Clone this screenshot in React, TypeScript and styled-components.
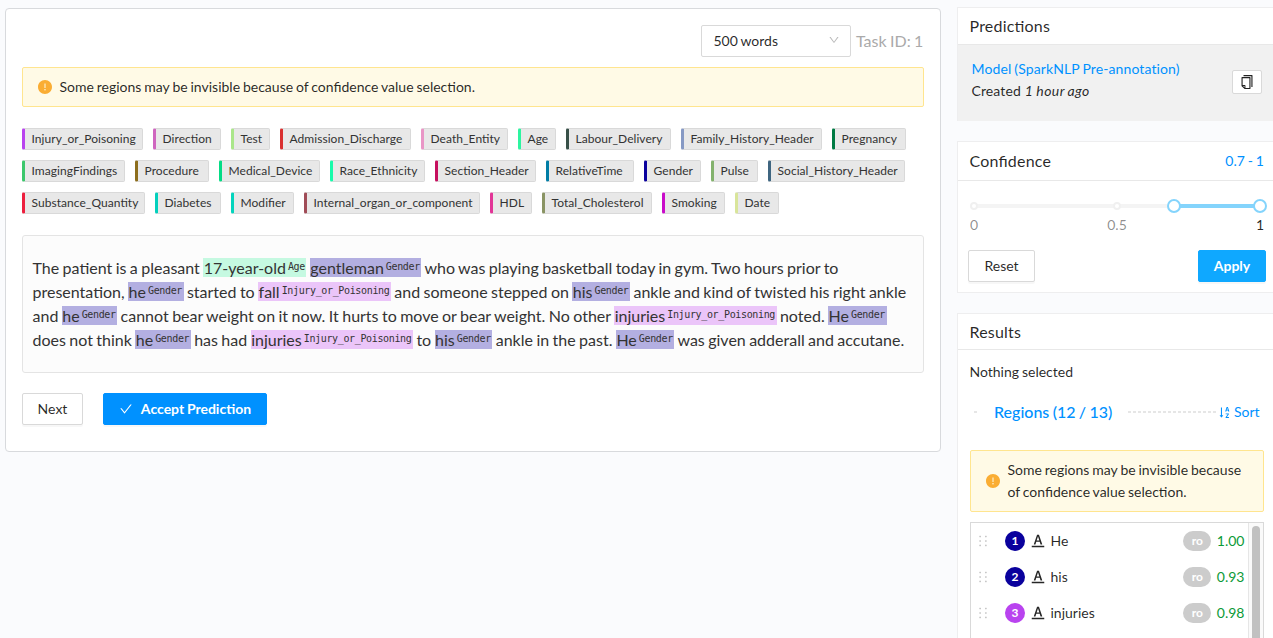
import React from "react";
import styled, { createGlobalStyle } from "styled-components";
import {
  AiFillExclamationCircle,
  AiOutlineCheck,
  AiOutlineCopy,
  AiOutlineDown,
  AiOutlineFontColors,
  AiOutlineHolder,
  AiOutlineSortAscending,
} from "react-icons/ai";

const GlobalStyle = createGlobalStyle`
  *, *::before, *::after { box-sizing: border-box; }
  html, body { margin: 0; height: 638px; overflow: hidden; background: #fafbfd; }
  body {
    font-family: Lato, "Liberation Sans", sans-serif;
    font-size: 14px;
    line-height: 22px;
    word-spacing: -0.7px;
    color: rgba(0, 0, 0, 0.85);
  }
`;

const Page = styled.div`
  display: flex;
  align-items: flex-start;
  gap: 16px;
  width: 1273px;
  height: 638px;
  padding: 8px 0 0 5px;
  overflow: hidden;
`;

const Editor = styled.main`
  flex: none;
  width: 936px;
  height: 444px;
  padding: 16px;
  background: #fff;
  border: 1px solid #d8dadd;
  border-radius: 4px;
`;

const TopBar = styled.div`
  display: flex;
  justify-content: flex-end;
  align-items: center;
  gap: 5px;
  height: 32px;
`;

const Select = styled.div`
  display: flex;
  align-items: center;
  justify-content: space-between;
  width: 150px;
  height: 32px;
  padding: 0 10px 0 11.5px;
  border: 1px solid #d9d9d9;
  border-radius: 2px;
  svg { color: rgba(0, 0, 0, 0.28); margin-top: -2px; }
`;

const TaskId = styled.span`
  width: 68px;
  font-size: 16px;
  white-space: nowrap;
  color: #aaa;
`;

const Alert = styled.div<{ $compact?: boolean }>`
  display: flex;
  align-items: center;
  gap: 6.5px;
  min-height: 40px;
  margin: ${(p) => (p.$compact ? "26px 9px 0 12px" : "10px 0 0")};
  padding: ${(p) => (p.$compact ? "8px 14px" : "0 14px")};
  background: #fffae6;
  border: 1px solid #ffe58f;
  border-radius: 2px;
  svg { flex: none; color: #faad33; }
`;

const Labels = styled.div`
  display: flex;
  flex-wrap: wrap;
  gap: 10px;
  margin-top: 21px;
`;

const Label = styled.span<{ $color: string; $width: number }>`
  width: ${(p) => p.$width}px;
  height: 22px;
  padding-left: 6.5px;
  font-size: 12px;
  line-height: 20px;
  letter-spacing: 0.05px;
  font-feature-settings: "liga" 1;
  color: #333;
  background: #e8e8e8;
  border: 1px solid #d9d9d9;
  border-left: 3px solid ${(p) => p.$color};
  border-radius: 2px;
  white-space: nowrap;
`;

const TextPanel = styled.div`
  height: 138px;
  margin-top: 21px;
  padding: 20px 9.5px;
  font-size: 16px;
  line-height: 24px;
  word-spacing: -0.68px;
  color: #333;
  background: #fcfcfc;
  border: 1px solid #e4e4e4;
  border-radius: 3px;
`;

const Line = styled.div`
  white-space: pre;
`;

const Mark = styled.span<{ $bg: string }>`
  padding: 0 0.5px;
  background: ${(p) => p.$bg};
`;

const Tag = styled.sup`
  margin: 0 1px 0 2px;
  font-family: "DejaVu Sans Mono", "Liberation Mono", monospace;
  font-size: 10px;
  letter-spacing: -0.35px;
  line-height: 0;
  vertical-align: 4.5px;
`;

const Actions = styled.div`
  display: flex;
  gap: 20px;
  margin-top: 20px;
`;

const Button = styled.button<{ $bg?: string; $width: number }>`
  display: flex;
  align-items: center;
  justify-content: center;
  gap: 8px;
  width: ${(p) => p.$width}px;
  height: 32px;
  padding: 0;
  font: ${(p) => (p.$bg ? 700 : 400)} 14px/22px Lato, "Liberation Sans", sans-serif;
  word-spacing: -0.7px;
  color: ${(p) => (p.$bg ? "#fff" : "rgba(0, 0, 0, 0.85)")};
  background: ${(p) => p.$bg ?? "#fff"};
  border: 1px solid ${(p) => p.$bg ?? "#d9d9d9"};
  border-radius: 2px;
  box-shadow: 0 2px 0 rgba(0, 0, 0, 0.03);
`;

const Sidebar = styled.aside`
  display: flex;
  flex-direction: column;
  gap: 20px;
  flex: 1;
  min-width: 0;
  margin-top: -1px;
`;

const Card = styled.section<{ $height: number }>`
  flex: none;
  height: ${(p) => p.$height}px;
  background: #fff;
  border: 1px solid #eeeeef;
  border-right: 0;
`;

const CardHead = styled.header<{ $height: number }>`
  display: flex;
  align-items: center;
  justify-content: space-between;
  height: ${(p) => p.$height}px;
  padding: 0 9px 0 11.5px;
  font-size: 16px;
  letter-spacing: 0.2px;
  font-feature-settings: "liga" 1;
  border-bottom: 1px solid #e8e8e8;
`;

const Accent = styled.span`
  font-size: 14px;
  letter-spacing: 0;
  color: #0091ff;
`;

const Prediction = styled.div`
  display: flex;
  align-items: center;
  justify-content: space-between;
  height: 76px;
  padding: 0 11px 0 13.5px;
  background: #f1f1f1;
`;

const PredictionText = styled.div`
  margin-bottom: 6px;
  letter-spacing: 0.11px;
  ${Accent} { letter-spacing: 0.11px; }
  i { margin-left: 1px; letter-spacing: 0.4px; }
`;

const CopyButton = styled.button`
  display: flex;
  align-items: center;
  justify-content: center;
  width: 30px;
  height: 24px;
  margin-bottom: 2px;
  padding: 0;
  color: #222;
  background: #fff;
  border: 1px solid #d9d9d9;
  border-radius: 2px;
`;

const Slider = styled.div`
  padding: 16px 13px 0 16px;
`;

const Rail = styled.div`
  display: flex;
  align-items: center;
  justify-content: space-between;
  height: 18px;
`;

const RailLine = styled.div<{ $grow: number; $active?: boolean }>`
  flex: ${(p) => p.$grow} 0 0;
  height: 4px;
  background: ${(p) => (p.$active ? "#84d4fc" : "#f4f4f4")};
`;

const Dot = styled.i`
  flex: none;
  width: 8px;
  height: 8px;
  margin: 0 -4px;
  background: #fff;
  border: 2px solid #f0f0f0;
  border-radius: 50%;
  z-index: 1;
`;

const Handle = styled.i`
  flex: none;
  width: 14px;
  height: 14px;
  margin: 0 -7px;
  background: #fff;
  border: 2px solid #84d4fc;
  border-radius: 50%;
  z-index: 1;
`;

const Marks = styled.div`
  display: grid;
  grid-template-columns: repeat(3, 30px);
  justify-content: space-between;
  margin: -1px -15px 0;
  line-height: 22px;
  text-align: center;
  color: rgba(0, 0, 0, 0.45);
  span:last-child { color: rgba(0, 0, 0, 0.85); }
`;

const CardActions = styled.div`
  display: flex;
  justify-content: space-between;
  padding: 14px 7px 0 10px;
`;

const Nothing = styled.p`
  margin: 11px 12px 0 11.5px;
`;

const RegionsHead = styled.div`
  display: flex;
  align-items: center;
  height: 24px;
  margin: 17px 13.5px 0 16px;
  color: #0091ff;
`;

const Dash = styled.i<{ $width?: number }>`
  ${(p) => (p.$width ? `flex: none; width: ${p.$width}px;` : "flex: 1;")}
  height: 2px;
  background: repeating-linear-gradient(90deg, #e6e6e6 0 3px, transparent 3px 5px);
`;

const RegionsTitle = styled.span`
  margin: 0 16px;
  font-size: 16px;
  font-weight: 500;
  white-space: nowrap;
`;

const Sort = styled.span`
  display: flex;
  align-items: center;
  gap: 2px;
`;

const RegionBox = styled.div`
  display: flex;
  height: 160px;
  margin: 10px 9px 0 12px;
  border: 1px solid #d9d9d9;
`;

const RegionList = styled.div`
  flex: 1;
`;

const Region = styled.div`
  display: flex;
  align-items: center;
  height: 36px;
  padding: 0 3.5px 0 4px;
`;

const Grip = styled(AiOutlineHolder)`
  margin-right: 14px;
  color: #c4c4c4;
`;

const Num = styled.b<{ $bg: string }>`
  width: 20px;
  height: 20px;
  margin-right: 5px;
  border-radius: 50%;
  background: ${(p) => p.$bg};
  color: #fff;
  font-size: 12px;
  line-height: 20px;
  text-align: center;
`;

const Name = styled.span`
  flex: 1;
  margin-left: 4.5px;
`;

const Readonly = styled.b`
  width: 28px;
  height: 20px;
  margin-right: 5.5px;
  border-radius: 10px;
  background: #ccc;
  color: #fff;
  font-size: 12px;
  line-height: 20px;
  text-align: center;
`;

const Score = styled.span`
  color: #0b9a38;
`;

const ScrollTrack = styled.div`
  width: 15px;
  padding: 3px 3px 0;
  background: #fafafa;
  border-left: 1px solid #e6e6e6;
`;

const ScrollThumb = styled.div`
  width: 8px;
  height: 150px;
  border-radius: 4px;
  background: #c1c1c1;
`;

const LABELS: [string, string, number][] = [
  ["Injury_or_Poisoning", "#b943ef", 121],
  ["Direction", "#cf66bf", 68],
  ["Test", "#aae68a", 39],
  ["Admission_Discharge", "#d93030", 131],
  ["Death_Entity", "#e996c6", 87],
  ["Age", "#2df5a0", 38],
  ["Labour_Delivery", "#385048", 105],
  ["Family_History_Header", "#8699c4", 141],
  ["Pregnancy", "#007a43", 74],
  ["ImagingFindings", "#3cc76c", 103],
  ["Procedure", "#8d6e1d", 74],
  ["Medical_Device", "#04dc85", 101],
  ["Race_Ethnicity", "#17fbab", 95],
  ["Section_Header", "#c60f5e", 101],
  ["RelativeTime", "#017da5", 88],
  ["Gender", "#0a019d", 57],
  ["Pulse", "#83b26d", 47],
  ["Social_History_Header", "#3f6580", 137],
  ["Substance_Quantity", "#ed1f3e", 123],
  ["Diabetes", "#04d0bd", 66],
  ["Modifier", "#04d4bd", 63],
  ["Internal_organ_or_component", "#a04c57", 176],
  ["HDL", "#e23597", 42],
  ["Total_Cholesterol", "#8a9464", 110],
  ["Smoking", "#c90cc9", 63],
  ["Date", "#d9e59b", 44],
];

const MARK_COLORS: Record<string, string> = {
  Age: "#c5f9e1",
  Gender: "#b3afe1",
  Injury_or_Poisoning: "#ebc5f9",
};

type Part = string | [string, string];

const LINES: Part[][] = [
  ["The patient is a pleasant ", ["17-year-old", "Age"], " ", ["gentleman", "Gender"], " who was playing basketball today in gym. Two hours prior to"],
  ["presentation, ", ["he", "Gender"], " started to ", ["fall", "Injury_or_Poisoning"], " and someone stepped on ", ["his", "Gender"], " ankle and kind of twisted his right ankle"],
  ["and ", ["he", "Gender"], " cannot bear weight on it now. It hurts to move or bear weight. No other ", ["injuries", "Injury_or_Poisoning"], " noted. ", ["He", "Gender"]],
  ["does not think ", ["he", "Gender"], " has had ", ["injuries", "Injury_or_Poisoning"], " to ", ["his", "Gender"], " ankle in the past. ", ["He", "Gender"], " was given adderall and accutane."],
];

const REGIONS = [
  { n: 1, name: "He", score: "1.00", color: "#0a019d" },
  { n: 2, name: "his", score: "0.93", color: "#0a019d" },
  { n: 3, name: "injuries", score: "0.98", color: "#b943ef" },
];

const WARNING = "Some regions may be invisible because of confidence value selection.";

export default function App() {
  return (
    <>
      <GlobalStyle />
      <Page>
        <Editor>
          <TopBar>
            <Select>500 words<AiOutlineDown size={12} /></Select>
            <TaskId>Task ID: 1</TaskId>
          </TopBar>
          <Alert><AiFillExclamationCircle size={16} />{WARNING}</Alert>
          <Labels>
            {LABELS.map(([name, color, width]) => (
              <Label key={name} $color={color} $width={width}>{name}</Label>
            ))}
          </Labels>
          <TextPanel>
            {LINES.map((line, i) => (
              <Line key={i}>
                {line.map((part, j) =>
                  typeof part === "string" ? part : (
                    <Mark key={j} $bg={MARK_COLORS[part[1]]}>{part[0]}<Tag>{part[1]}</Tag></Mark>
                  )
                )}
              </Line>
            ))}
          </TextPanel>
          <Actions>
            <Button $width={61}>Next</Button>
            <Button $width={164} $bg="#0091ff"><AiOutlineCheck size={14} />Accept Prediction</Button>
          </Actions>
        </Editor>
        <Sidebar>
          <Card $height={114}>
            <CardHead $height={37}>Predictions</CardHead>
            <Prediction>
              <PredictionText>
                <Accent>Model (SparkNLP Pre-annotation)</Accent>
                <div>Created <i>1 hour ago</i></div>
              </PredictionText>
              <CopyButton><AiOutlineCopy size={16} /></CopyButton>
            </Prediction>
          </Card>
          <Card $height={152}>
            <CardHead $height={39}>Confidence<Accent>0.7 - 1</Accent></CardHead>
            <Slider>
              <Rail>
                <Dot /><RailLine $grow={5} /><Dot /><RailLine $grow={2} />
                <Handle /><RailLine $grow={3} $active /><Handle />
              </Rail>
              <Marks><span>0</span><span>0.5</span><span>1</span></Marks>
            </Slider>
            <CardActions>
              <Button $width={67}>Reset</Button>
              <Button $width={68} $bg="#0fa8ff">Apply</Button>
            </CardActions>
          </Card>
          <Card $height={400}>
            <CardHead $height={36}>Results</CardHead>
            <Nothing>Nothing selected</Nothing>
            <RegionsHead>
              <Dash $width={4} />
              <RegionsTitle>Regions (12 / 13)</RegionsTitle>
              <Dash />
              <Sort><AiOutlineSortAscending size={15} />Sort</Sort>
            </RegionsHead>
            <Alert $compact><AiFillExclamationCircle size={16} />{WARNING}</Alert>
            <RegionBox>
              <RegionList>
                {REGIONS.map((r) => (
                  <Region key={r.n}>
                    <Grip size={16} />
                    <Num $bg={r.color}>{r.n}</Num>
                    <AiOutlineFontColors size={16} />
                    <Name>{r.name}</Name>
                    <Readonly>ro</Readonly>
                    <Score>{r.score}</Score>
                  </Region>
                ))}
              </RegionList>
              <ScrollTrack><ScrollThumb /></ScrollTrack>
            </RegionBox>
          </Card>
        </Sidebar>
      </Page>
    </>
  );
}
